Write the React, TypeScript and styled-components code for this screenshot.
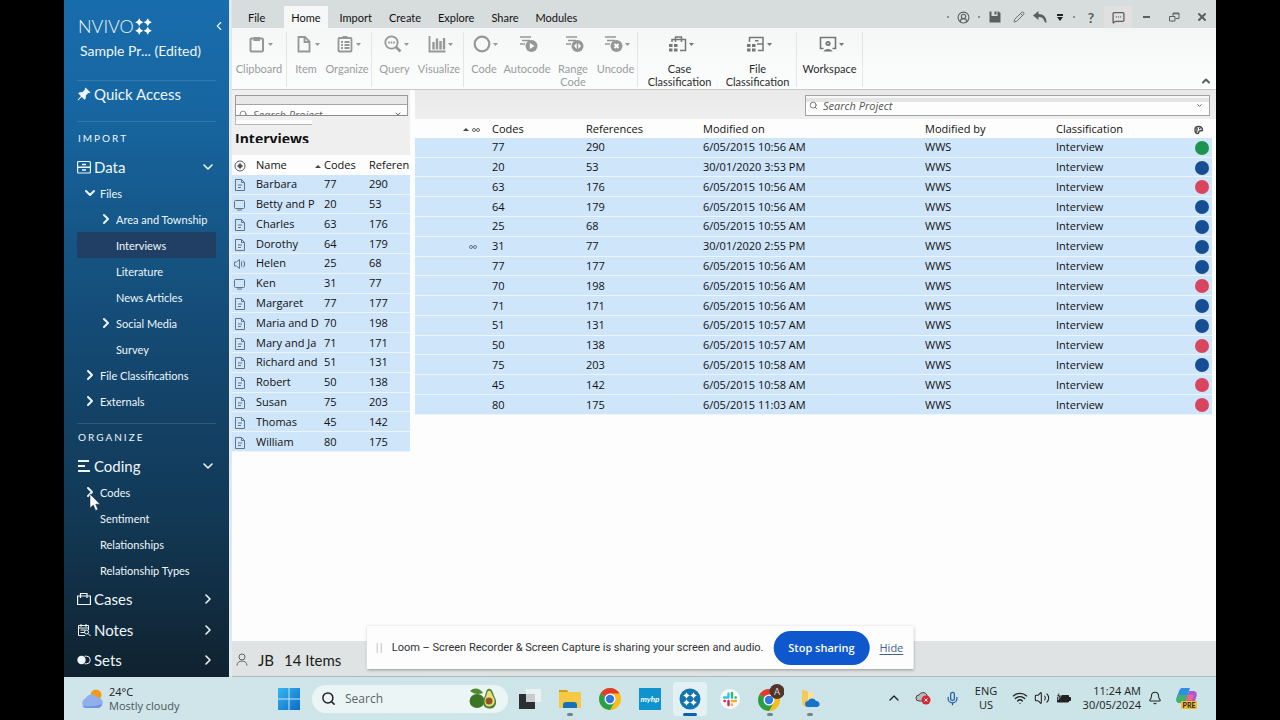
import React from "react";
import styled, { createGlobalStyle, css } from "styled-components";
import { ChevronDown, ChevronRight, ChevronLeft, ChevronUp, CircleUserRound, Pencil, MessageSquareMore, X, Bell, Mic, Wifi, Volume2, Search } from "lucide-react";

const uiFont = `"Open Sans", "Noto Sans", sans-serif`;

const Global = createGlobalStyle`
  *, *::before, *::after { box-sizing: border-box; }
  body { margin: 0; background: #000; font-family: Lato, sans-serif; color: #1c1c1c; }
  button { font: inherit; color: inherit; background: none; border: 0; padding: 0; margin: 0; }
  input { font: inherit; color: inherit; border: 0; padding: 0; background: none; outline: none; min-width: 0; }
  a { color: inherit; text-decoration: none; }
`;

const Desktop = styled.div`
  position: relative;
  width: 90%;
  min-height: 100vh;
  margin: 0 auto;
  display: flex;
  flex-direction: column;
  overflow: hidden;
`;

const AppWindow = styled.div`
  flex: 1;
  display: flex;
  background: #fdfdfd;
`;

/* ---------- Sidebar ---------- */

const Sidebar = styled.nav`
  width: 165px;
  flex: none;
  padding: 16px 13px 0;
  color: #eef6fb;
  background: linear-gradient(#186dac 0%, #1766a1 16%, #155584 36%, #14456c 56%, #123956 76%, #10222f 100%);
`;

const LogoRow = styled.div`
  height: 20px;
  display: flex;
  align-items: center;
  gap: 1px;
  margin-right: -10px;
  padding-left: 1px;
  font-size: 18px;
  font-weight: 300;
`;

const Collapse = styled.button`
  margin-left: auto;
  display: flex;
`;

const ProjectName = styled.div`
  height: 30px;
  padding-left: 3px;
  font-size: 14px;
  line-height: 30px;
  white-space: nowrap;
`;

const Rule = styled.hr<{ $top: number }>`
  margin: ${(p) => p.$top}px 0 0;
  border: 0;
  border-top: 1px solid rgba(190, 220, 240, 0.16);
`;

const Caption = styled.h2<{ $gap: number }>`
  margin: ${(p) => p.$gap}px 0 10px;
  padding-left: 1px;
  font-size: 10px;
  line-height: 12px;
  font-weight: 400;
  letter-spacing: 2px;
`;

const NavHead = styled.button<{ $h: number }>`
  width: 100%;
  height: ${(p) => p.$h}px;
  display: flex;
  align-items: center;
  gap: 3px;
  font-size: 15px;
  text-align: left;
  > span { flex: 1; }
  > svg:first-child { flex: none; }
`;

const NavItem = styled.a<{ $level: number; $active?: boolean }>`
  position: relative;
  height: 26px;
  display: flex;
  align-items: center;
  gap: 4px;
  padding-left: ${(p) => p.$level * 16 - 9}px;
  font-size: 11px;
  white-space: nowrap;
  ${(p) => p.$active && css`background: #213f64;`}
`;

const ArrowSlot = styled.span`
  width: 12px;
  height: 14px;
  flex: none;
  display: flex;
  align-items: center;
  justify-content: center;
  svg { flex: none; }
`;

const Cursor = styled.svg`
  position: absolute;
  left: 12px;
  top: 14px;
  z-index: 2;
`;

/* ---------- Main area ---------- */

const Main = styled.div`
  flex: 1;
  min-width: 0;
  display: flex;
  flex-direction: column;
  border-left: 3px solid #dfe9ee;
`;

const TitleBar = styled.header`
  height: 28px;
  display: flex;
  justify-content: space-between;
  align-items: flex-end;
  background: #d7dcdc;
`;

const Tabs = styled.div`
  display: flex;
  gap: 1px;
  padding-left: 8px;
`;

const Tab = styled.button<{ $active?: boolean }>`
  height: 22px;
  padding: 0 8px;
  font-size: 11px;
  color: #111;
  ${(p) => p.$active && css`
    background: #f6f8f8;
    padding: 0 7px;
    margin: 0 3px 0 10px;
  `}
`;

const WindowTools = styled.div`
  display: flex;
  color: #5c5f60;
`;

const Tool = styled.button<{ $w: number; $lit?: boolean }>`
  width: ${(p) => p.$w}px;
  height: 22px;
  display: flex;
  align-items: center;
  justify-content: center;
  font-size: 14px;
  font-weight: 700;
  background: ${(p) => (p.$lit ? "#e0e0e0" : "none")};
`;

const Dot = styled.span<{ $w: number }>`
  width: ${(p) => p.$w}px;
  display: flex;
  align-items: center;
  justify-content: center;
  &::before { content: ""; width: 2px; height: 2px; background: #8b9090; }
`;

const Ribbon = styled.div`
  height: 62px;
  display: flex;
  padding-top: 4px;
  background: linear-gradient(#f5f7f7, #fcfdfd);
  border-bottom: 1px solid #c6c9c9;
`;

const Group = styled.div`
  height: 55px;
  display: flex;
  align-items: flex-start;
  padding: 0 1px;
  border-right: 1px solid #e4e6e6;
`;

const RibbonButton = styled.button<{ $w: number; $on?: boolean }>`
  width: ${(p) => p.$w}px;
  font-size: 11px;
  line-height: 13px;
  color: ${(p) => (p.$on ? "#2c2c2c" : "#9a9c9c")};
  > span {
    height: 24px;
    margin-bottom: 6px;
    padding-left: 3px;
    display: flex;
    align-items: center;
    justify-content: center;
    gap: 2px;
    color: ${(p) => (p.$on ? "#747777" : "#969898")};
  }
`;

const RibbonEnd = styled.button`
  margin: auto 4px 2px auto;
  display: flex;
  color: #5c5f60;
`;

const Panels = styled.div`
  flex: 1;
  display: flex;
  font-family: ${uiFont};
  font-size: 11px;
`;

const ListPanel = styled.section`
  width: 178px;
  flex: none;
`;

const ListTop = styled.div`
  height: 65px;
  padding: 5px 2px 0 3px;
  background: #efefef;
`;

const ListSearch = styled.label`
  height: 21px;
  display: flex;
  flex-direction: column;
  border: 1px solid #9b9b9b;
  border-bottom-color: #8b8b8b;
  overflow: hidden;
  &::before {
    content: "";
    height: 9px;
    flex: none;
    background: #e8e8e8;
    border-bottom: 1px solid #a5a5a5;
  }
  > span {
    height: 18px;
    flex: none;
    display: flex;
    align-items: center;
    gap: 5px;
    padding: 0 5px 0 3px;
    background: #fdfdfd;
    color: #666;
    font-style: italic;
  }
  input { flex: 1; height: 18px; }
  input::placeholder { color: #666; opacity: 1; }
`;

const SearchTail = styled.div`
  width: 77px;
  height: 9px;
  background: linear-gradient(#efefef 0 4px, #fcfcfc 4px);
  border: 1px solid #b9b9b9;
  border-width: 0 0 1px 1px;
`;

const ListTitle = styled.h1`
  height: 12px;
  margin: 6px 0 0;
  overflow: hidden;
  font-size: 14px;
  line-height: 16px;
  font-weight: 700;
  color: #111;
`;

const DetailPanel = styled.section`
  flex: 1;
  min-width: 0;
  margin-left: 5px;
  padding-right: 4px;
`;

const DetailTop = styled.div`
  height: 29px;
  margin-right: -4px;
  padding: 5px 6px 3px 0;
  display: flex;
  justify-content: flex-end;
  background: linear-gradient(#e9e9e9, #efefef);
`;

const DetailSearch = styled.label`
  width: 405px;
  display: flex;
  align-items: center;
  gap: 5px;
  padding: 0 6px 0 3px;
  border: 1px solid #a2a2a2;
  background: linear-gradient(#f7f7f7 0 2px, #e4e4e4 2px 6px, #fdfdfd 6px);
  color: #555;
  font-style: italic;
  input { flex: 1; height: 16px; }
  input::placeholder { color: #555; opacity: 1; }
`;

const Table = styled.table<{ $h: number }>`
  width: 100%;
  height: ${(p) => p.$h}px;
  table-layout: fixed;
  border-collapse: collapse;
  text-align: left;
  white-space: nowrap;
  line-height: 14px;
  color: #111;
  th { height: ${(p) => p.$h - 277}px; padding: 0; font-weight: 400; }
  td { padding: 0; border-bottom: 1px solid #eaf5fe; }
  tbody tr { background: #cfe5fa; }
  td svg, th svg { vertical-align: middle; }
`;

const IconCell = styled.td`
  &&& { padding-left: 2px; color: #5f7485; }
`;

const EndCell = styled.td`
  &&& { text-align: right; padding-right: 3px; }
`;

const Swatch = styled.span<{ $c: string }>`
  display: inline-block;
  width: 14px;
  height: 14px;
  vertical-align: middle;
  border-radius: 50%;
  background: ${(p) => p.$c};
`;

const StatusBar = styled.footer`
  height: 36px;
  display: flex;
  align-items: center;
  gap: 10px;
  padding: 2px 0 0 4px;
  font-size: 15px;
  background: #dfe3e3;
  border-bottom: 1px solid #aebabc;
`;

/* ---------- Share bar ---------- */

const ShareBar = styled.div`
  position: absolute;
  left: 50%;
  bottom: 51px;
  transform: translateX(-50%);
  height: 43px;
  display: flex;
  align-items: center;
  gap: 10px;
  padding: 0 10px;
  font-family: ${uiFont};
  font-size: 11px;
  color: #2f3235;
  white-space: nowrap;
  background: #fdfdfd;
  box-shadow: 0 1px 3px rgba(0, 0, 0, 0.35);
`;

const ShareText = styled.span`
  font-family: Roboto, sans-serif;
`;

const Grip = styled.span`
  width: 5px;
  height: 10px;
  border: solid #c4c4c4;
  border-width: 0 1px;
`;

const StopButton = styled.button`
  width: 96px;
  height: 34px;
  border-radius: 17px;
  font-weight: 600;
  color: #fff;
  background: #0f57cd;
`;

const HideLink = styled.a`
  color: #3f6291;
  text-decoration: underline;
  text-underline-offset: 2px;
`;

/* ---------- Taskbar ---------- */

const Taskbar = styled.div`
  height: 43px;
  display: flex;
  align-items: center;
  font-family: ${uiFont};
  font-size: 11px;
  line-height: 14px;
  color: #222;
  background: linear-gradient(90deg, #cfe5e9, #cbe4e7);
`;

const Weather = styled.button`
  width: 208px;
  display: flex;
  align-items: center;
  gap: 5px;
  padding-left: 16px;
  text-align: left;
  small { display: block; font-size: 11px; color: #4b5558; }
`;

const TaskButton = styled.button<{ $active?: boolean; $running?: boolean }>`
  position: relative;
  width: 34px;
  height: 34px;
  margin-right: 6px;
  display: flex;
  align-items: center;
  justify-content: center;
  border-radius: 4px;
  background: ${(p) => (p.$active ? "#e4f1f4" : "none")};
  ${(p) => (p.$active || p.$running) && css`
    &::after {
      content: "";
      position: absolute;
      bottom: 0;
      left: 50%;
      width: ${p.$active ? 14 : 6}px;
      height: 3px;
      margin-left: ${p.$active ? -7 : -3}px;
      border-radius: 2px;
      background: ${p.$active ? "#0d62b0" : "#73858a"};
    }
  `}
`;

const TaskSearch = styled.label`
  width: 196px;
  height: 28px;
  margin-right: 5px;
  display: flex;
  align-items: center;
  gap: 9px;
  padding: 0 11px 0 9px;
  border-radius: 14px;
  background: #ebf5f5;
  font-size: 12px;
  input { flex: 1; }
  input::placeholder { color: #5a6466; opacity: 1; }
`;

const Tray = styled.div`
  margin-left: auto;
  padding: 0 11px 1px 0;
  display: flex;
  align-items: center;
  text-align: center;
`;

const TrayButton = styled.button<{ $w: number }>`
  width: ${(p) => p.$w}px;
  display: flex;
  align-items: center;
  justify-content: center;
`;

const Clock = styled.div`
  width: 66px;
  text-align: right;
`;

/* ---------- Icons ---------- */

const Caret = () => (
  <svg width="5" height="3" viewBox="0 0 5 3"><path d="M0 0h5L2.5 3z" fill="currentColor" /></svg>
);

const Icon = ({ children, size = 18, sw = 1.8 }: { children: React.ReactNode; size?: number; sw?: number }) => (
  <svg width={size} height={size} viewBox="0 0 18 18" fill="none" stroke="currentColor" strokeWidth={sw}>{children}</svg>
);

const codeLines = <path d="M0 2h11M2 5.500h8M0 9h5" strokeWidth="1.600" />;
const grid = <path d="M0 9h3.500v3H0zM5 9h3.500v3H5zM0 13.500h3.500v3H0zM5 13.500h3.500v3H5z" fill="currentColor" stroke="none" />;

const ribbonIcons: Record<string, React.ReactNode> = {
  Clipboard: <><rect x="2.500" y="3.500" width="12.500" height="13" rx="1" strokeWidth="2" /><path d="M5.500 2h6.500v4H5.500z" fill="currentColor" stroke="none" /></>,
  Item: <path d="M3.500 2h6.500l4.500 4.500v10h-11zM9.500 2v5h5" />,
  Organize: <><rect x="2.500" y="3" width="13" height="13.500" rx="1" /><path d="M6.500 1h5v3h-5z" fill="currentColor" stroke="none" /><path d="M5 7h2M8.500 7h5M5 10h2M8.500 10h5M5 13h2M8.500 13h5" /></>,
  Query: <><circle cx="7.500" cy="7.500" r="6.200" /><path d="M12 12l4.500 4.500" strokeWidth="2.600" /><path d="M4.200 7.500h1.600M6.700 7.500h1.600M9.200 7.500h1.600" /></>,
  Visualize: <><path d="M1.500 1v15.500h16" /><path d="M5.500 7v7.500M9 3.500v11M12.500 6v8.500M16 3v11.500" strokeWidth="2.400" /></>,
  Code: <circle cx="9" cy="9" r="7.300" strokeWidth="2.200" />,
  Autocode: <>{codeLines}<circle cx="11.500" cy="11" r="6" fill="currentColor" stroke="none" /><path d="M9.800 8l4.700 3-4.700 3z" fill="#fff" stroke="none" /></>,
  "Range Code": <>{codeLines}<circle cx="11.500" cy="11" r="6" fill="currentColor" stroke="none" /><path d="M10.700 8v6l-2.700-3zM12.300 8v6l2.700-3z" fill="#fff" stroke="none" /></>,
  Uncode: <>{codeLines}<circle cx="11.500" cy="11" r="6" fill="currentColor" stroke="none" /><path d="M9.500 9l4 4M13.500 9l-4 4" stroke="#fff" /></>,
  "Case Classification": <><path d="M3 7V4.500h13.500v11H11M6.500 4V2h6v2M6.500 7V5M12.500 7V5" strokeWidth="1.500" />{grid}</>,
  "File Classification": <><path d="M2.500 7V2.500h13.500v13h-5M10 9h6M8 5.800h3.500" strokeWidth="1.500" />{grid}</>,
  Workspace: <><path d="M4.500 13.500H1.500v-11h15v11h-3" strokeWidth="1.600" /><circle cx="9" cy="8.500" r="1.700" /><path d="M4.500 16.500c1-3.500 8-3.500 9 0z" fill="currentColor" stroke="none" /></>,
};

type RibbonItem = [name: string, width: number, caret: boolean];
const ribbonGroups: RibbonItem[][] = [
  [["Clipboard", 52, true]],
  [["Item", 36, true], ["Organize", 46, true]],
  [["Query", 43, true], ["Visualize", 46, true]],
  [["Code", 38, true], ["Autocode", 48, false], ["Range Code", 44, false], ["Uncode", 41, true]],
  [["Case Classification", 81, true], ["File Classification", 75, true]],
  [["Workspace", 63, true]],
];
const enabled = ["Case Classification", "File Classification", "Workspace"];

const LogoMark = ({ size = 17, color = "#fff" }: { size?: number; color?: string }) => (
  <svg width={size} height={size} viewBox="0 0 16 16" fill={color}>
    {[[4, 4], [12, 4], [4, 12], [12, 12]].map(([x, y]) => (
      <path key={`${x}-${y}`} d={`M${x} ${y - 3.8}l1.300 2.500 2.500 1.300-2.500 1.300-1.300 2.500-1.300-2.500-2.500-1.300 2.500-1.300z`} />
    ))}
  </svg>
);

const DocIcon = () => (
  <svg width="12" height="12" viewBox="0 0 12 12" fill="none" stroke="currentColor"><path d="M1.500.5h6l3 3v8h-9zM7.500.5v3h3M4 6h4M4 8.500h3" /></svg>
);
const VideoIcon = () => (
  <svg width="12" height="12" viewBox="0 0 12 12" fill="none" stroke="currentColor"><rect x=".5" y="1.500" width="10" height="8" rx="1" /><path d="M3 11h5" /></svg>
);
const AudioIcon = () => (
  <svg width="12" height="12" viewBox="0 0 12 12" fill="none" stroke="currentColor"><path d="M.5 4h2l3-2.500v9L2.500 8h-2zM7.500 3.500v5M9 2.500c2 2 2 5 0 7M10.500 4v4" /></svg>
);
const LinkIcon = () => (
  <svg width="8" height="6" viewBox="0 0 8 6" fill="none" stroke="#666"><circle cx="2" cy="3" r="1.500" /><circle cx="6" cy="3" r="1.500" /></svg>
);
const SortIcon = () => (
  <svg width="6" height="3" viewBox="0 0 6 3"><path d="M0 3h6L3 0z" fill="#444" /></svg>
);
const ChromeIcon = () => (
  <svg width="22" height="22" viewBox="0 0 22 22">
    <circle cx="11" cy="11" r="11" fill="#f8bd16" />
    <path d="M11 11L1.500 5.500A11 11 0 0 1 20.500 5.500H11z" fill="#df3b2e" />
    <path d="M1.500 5.500A11 11 0 0 0 11 22l4.800-8.300L11 11z" fill="#28a04b" />
    <circle cx="11" cy="11" r="5.500" fill="#fff" /><circle cx="11" cy="11" r="4.200" fill="#2f78dc" />
  </svg>
);

/* ---------- Data ---------- */

type Row = [name: string, kind: "doc" | "video" | "audio", codes: number, refs: number, modified: string, color: string];
const green = "#1d9350";
const blue = "#164d93";
const red = "#d9455f";
const rows: Row[] = [
  ["Barbara", "doc", 77, 290, "6/05/2015 10:56 AM", green],
  ["Betty and P", "video", 20, 53, "30/01/2020 3:53 PM", blue],
  ["Charles", "doc", 63, 176, "6/05/2015 10:56 AM", red],
  ["Dorothy", "doc", 64, 179, "6/05/2015 10:56 AM", blue],
  ["Helen", "audio", 25, 68, "6/05/2015 10:55 AM", blue],
  ["Ken", "video", 31, 77, "30/01/2020 2:55 PM", blue],
  ["Margaret", "doc", 77, 177, "6/05/2015 10:56 AM", blue],
  ["Maria and D", "doc", 70, 198, "6/05/2015 10:56 AM", red],
  ["Mary and Ja", "doc", 71, 171, "6/05/2015 10:56 AM", blue],
  ["Richard and", "doc", 51, 131, "6/05/2015 10:57 AM", blue],
  ["Robert", "doc", 50, 138, "6/05/2015 10:57 AM", red],
  ["Susan", "doc", 75, 203, "6/05/2015 10:58 AM", blue],
  ["Thomas", "doc", 45, 142, "6/05/2015 10:58 AM", red],
  ["William", "doc", 80, 175, "6/05/2015 11:03 AM", red],
];
const kindIcon = { doc: <DocIcon />, video: <VideoIcon />, audio: <AudioIcon /> };

type Nav = [label: string, level: number, arrow?: "down" | "right"];
const dataNav: Nav[] = [
  ["Files", 1, "down"],
  ["Area and Township", 2, "right"],
  ["Interviews", 2],
  ["Literature", 2],
  ["News Articles", 2],
  ["Social Media", 2, "right"],
  ["Survey", 2],
  ["File Classifications", 1, "right"],
  ["Externals", 1, "right"],
];
const codingNav: Nav[] = [["Codes", 1, "right"], ["Sentiment", 1], ["Relationships", 1], ["Relationship Types", 1]];

const NavList = ({ items }: { items: Nav[] }) => (
  <>
    {items.map(([label, level, arrow]) => (
      <NavItem key={label} href="#" $level={level} $active={label === "Interviews"}>
        <ArrowSlot>
          {arrow === "down" && <ChevronDown size={16} strokeWidth={3} />}
          {arrow === "right" && <ChevronRight size={16} strokeWidth={3} />}
        </ArrowSlot>
        {label}
        {label === "Codes" && (
          <Cursor width="12" height="19" viewBox="0 0 12 19"><path d="M1 1v14l3.300-3 2.300 5.500 2.400-1-2.300-5.300H11z" fill="#fff" stroke="#23384a" strokeWidth=".6" /></Cursor>
        )}
      </NavItem>
    ))}
  </>
);

export default function App() {
  return (
    <Desktop>
      <Global />
      <AppWindow>
        <Sidebar aria-label="Project">
          <LogoRow>
            NVIVO<LogoMark />
            <Collapse aria-label="Collapse navigation"><ChevronLeft size={14} strokeWidth={2} /></Collapse>
          </LogoRow>
          <ProjectName>Sample Pr... (Edited)</ProjectName>
          <Rule $top={14} />
          <NavHead $h={26}>
            <svg width="14" height="14" viewBox="0 0 14 14" fill="currentColor"><path d="M8.500.5l5 5-1.500.8-.8-.2-2.300 2.500-.2 2.900-1.200 1.200-2.700-2.800L1 13.500.5 13l3.500-3.900L1.300 6.500l1.200-1.200 3-.3L7.900 2.800l-.2-.9z" /></svg>
            <span>Quick Access</span>
          </NavHead>
          <Rule $top={14} />
          <Caption $gap={10}>IMPORT</Caption>
          <NavHead $h={26}>
            <svg width="14" height="14" viewBox="0 0 14 14" fill="none" stroke="currentColor"><rect x=".6" y="1.500" width="12.800" height="11.500" rx="1" strokeWidth="1.200" /><path d="M.5 7.200h13M5 4.500h4M5 10h4" strokeWidth="1.400" /></svg>
            <span>Data</span>
            <ChevronDown size={16} strokeWidth={2.4} />
          </NavHead>
          <NavList items={dataNav} />
          <Rule $top={9} />
          <Caption $gap={7}>ORGANIZE</Caption>
          <NavHead $h={26}>
            <svg width="14" height="14" viewBox="0 0 14 14" fill="none" stroke="currentColor" strokeWidth="2.200"><path d="M1 2h11M1 7h7M1 12h12" /></svg>
            <span>Coding</span>
            <ChevronDown size={16} strokeWidth={2.4} />
          </NavHead>
          <NavList items={codingNav} />
          <NavHead $h={32}>
            <svg width="14" height="14" viewBox="0 0 14 14" fill="none" stroke="currentColor"><path d="M.6 4h12.800v8.500H.6zM3.500 6V1.500h6.500V6" strokeWidth="1.200" /></svg>
            <span>Cases</span>
            <ChevronRight size={16} strokeWidth={2.4} />
          </NavHead>
          <NavHead $h={30}>
            <svg width="14" height="14" viewBox="0 0 14 14" fill="none" stroke="currentColor"><path d="M11.500 7V2.500h-10v10H8M4 1v3M9 1v3M1.500 5h10M3.500 7h5M3.500 9.500h4" /><circle cx="9.500" cy="9" r="2" /><path d="M11 10.500l2.500 2.500" /></svg>
            <span>Notes</span>
            <ChevronRight size={16} strokeWidth={2.4} />
          </NavHead>
          <NavHead $h={30}>
            <svg width="14" height="14" viewBox="0 0 14 14"><circle cx="4.500" cy="7" r="4.200" fill="currentColor" /><path d="M7.500 3.200h2a3.800 3.800 0 0 1 0 7.600h-2" fill="none" stroke="currentColor" /></svg>
            <span>Sets</span>
            <ChevronRight size={16} strokeWidth={2.4} />
          </NavHead>
        </Sidebar>

        <Main>
          <TitleBar>
            <Tabs>
              {["File", "Home", "Import", "Create", "Explore", "Share", "Modules"].map((t) => (
                <Tab key={t} $active={t === "Home"}>{t}</Tab>
              ))}
            </Tabs>
            <WindowTools>
              <Dot $w={6} />
              <Tool $w={24} aria-label="Account"><CircleUserRound size={13} /></Tool>
              <Dot $w={7} />
              <Tool $w={26} aria-label="Save">
                <svg width="12" height="12" viewBox="0 0 12 12" fill="currentColor"><path d="M.5.500h2v4.500h6V.500h1L11.500 2v9.500H.5zM5.500.500h2v3h-2z" /></svg>
              </Tool>
              <Tool $w={22} aria-label="Edit"><Pencil size={12} strokeWidth={1.8} /></Tool>
              <Tool $w={20} aria-label="Undo">
                <svg width="14" height="12" viewBox="0 0 14 12"><path d="M5.500 0L0 4.500 5.500 9V6c3 0 5 .8 6.500 5.500h1.500C13.500 6 10.500 3 5.500 3z" fill="currentColor" /></svg>
              </Tool>
              <Tool $w={20} aria-label="Customize">
                <svg width="6" height="7" viewBox="0 0 6 7" fill="#222"><path d="M0 0h6v2H0zM0 3h6L3 7z" /></svg>
              </Tool>
              <Dot $w={8} />
              <Tool $w={26} aria-label="Help">?</Tool>
              <Tool $w={28} $lit aria-label="Feedback"><MessageSquareMore size={13} strokeWidth={2.4} /></Tool>
              <Tool $w={28} aria-label="Minimize"><svg width="7" height="2" viewBox="0 0 7 2"><path d="M0 0h7v2H0z" fill="currentColor" /></svg></Tool>
              <Tool $w={28} aria-label="Restore">
                <svg width="11" height="10" viewBox="0 0 11 10" fill="none" stroke="currentColor"><path d="M.5 4.500h5.500v4.500H.5zM4 4V1h6v5.500H6.500M4 1.800h6" /></svg>
              </Tool>
              <Tool $w={28} aria-label="Close"><X size={12} strokeWidth={4} /></Tool>
            </WindowTools>
          </TitleBar>

          <Ribbon>
            {ribbonGroups.map((g) => (
              <Group key={g[0][0]}>
                {g.map(([name, w, caret]) => (
                  <RibbonButton key={name} $w={w} $on={enabled.includes(name)}>
                    <span><Icon>{ribbonIcons[name]}</Icon>{caret && <Caret />}</span>
                    {name}
                  </RibbonButton>
                ))}
              </Group>
            ))}
            <RibbonEnd aria-label="Collapse ribbon"><ChevronUp size={12} strokeWidth={4} /></RibbonEnd>
          </Ribbon>

          <Panels>
            <ListPanel>
              <ListTop>
                <ListSearch>
                  <span>
                    <Search size={9} />
                    <input placeholder="Search Project" aria-label="Search list" />
                    <ChevronDown size={8} strokeWidth={3} />
                  </span>
                </ListSearch>
                <SearchTail />
                <ListTitle>Interviews</ListTitle>
              </ListTop>
              <Table $h={297}>
                <colgroup><col style={{ width: 24 }} /><col style={{ width: 59 }} /><col style={{ width: 9 }} /><col style={{ width: 45 }} /><col /></colgroup>
                <thead>
                  <tr>
                    <th>
                      <svg width="15" height="12" viewBox="0 0 15 12" fill="none" stroke="#555"><circle cx="8" cy="6" r="5" /><path d="M8 3l3 3-3 3-3-3z" fill="#555" stroke="none" /></svg>
                    </th>
                    <th>Name</th>
                    <th><SortIcon /></th>
                    <th>Codes</th>
                    <th>Referen</th>
                  </tr>
                </thead>
                <tbody>
                  {rows.map(([name, kind, codes, refs]) => (
                    <tr key={name}>
                      <IconCell>{kindIcon[kind]}</IconCell>
                      <td>{name}</td>
                      <td />
                      <td>{codes}</td>
                      <td>{refs}</td>
                    </tr>
                  ))}
                </tbody>
              </Table>
            </ListPanel>

            <DetailPanel>
              <DetailTop>
                <DetailSearch>
                  <Search size={9} />
                  <input placeholder="Search Project" aria-label="Search project" />
                  <ChevronDown size={7} strokeWidth={3} />
                </DetailSearch>
              </DetailTop>
              <Table $h={296}>
                <colgroup><col style={{ width: 48 }} /><col style={{ width: 29 }} /><col style={{ width: 94 }} /><col style={{ width: 117 }} /><col style={{ width: 222 }} /><col style={{ width: 131 }} /><col /><col style={{ width: 24 }} /></colgroup>
                <thead>
                  <tr>
                    <th />
                    <th><SortIcon /> <LinkIcon /></th>
                    <th>Codes</th>
                    <th>References</th>
                    <th>Modified on</th>
                    <th>Modified by</th>
                    <th>Classification</th>
                    <th>
                      <svg width="18" height="10" viewBox="0 0 18 10" fill="none" stroke="#444" strokeWidth="1.400"><path d="M14.500 5.500c0-2.500-1.500-4-4-4S7 3 7 5s1 3.500 3 3.500c1.500 0 0-2 1.500-2.500z" /><path d="M8 4h2M11 3.500h1.500M8 6h1.500" /></svg>
                    </th>
                  </tr>
                </thead>
                <tbody>
                  {rows.map(([name, , codes, refs, modified, color]) => (
                    <tr key={name}>
                      <td />
                      <td>{name === "Ken" && <svg width="14" height="6" viewBox="-6 0 14 6" fill="none" stroke="#678"><circle cx="2" cy="3" r="1.500" /><circle cx="6" cy="3" r="1.500" /></svg>}</td>
                      <td>{codes}</td>
                      <td>{refs}</td>
                      <td>{modified}</td>
                      <td>WWS</td>
                      <td>Interview</td>
                      <EndCell><Swatch $c={color} /></EndCell>
                    </tr>
                  ))}
                </tbody>
              </Table>
            </DetailPanel>
          </Panels>

          <StatusBar>
            <svg width="12" height="13" viewBox="0 0 12 13" fill="none" stroke="#666"><circle cx="6" cy="4" r="3" /><path d="M1 12.500c0-6 10-6 10 0" /></svg>
            <span>JB</span>
            <span>14 Items</span>
          </StatusBar>
        </Main>
      </AppWindow>

      <Taskbar>
        <Weather>
          <svg width="24" height="22" viewBox="0 0 24 22"><circle cx="16" cy="7" r="5.500" fill="#f39a1e" /><path d="M6 20a5 5 0 0 1-.5-9.500A6.500 6.500 0 0 1 17 9.500 5.200 5.200 0 0 1 18 20z" fill="#8fb0ea" /><path d="M6 20a5 5 0 0 1-3.500-2C8 19 17 18 22 16a5 5 0 0 1-4 4z" fill="#6d93dd" /></svg>
          <span>24°C<small>Mostly cloudy</small></span>
        </Weather>
        <TaskButton aria-label="Start">
          <svg width="22" height="22" viewBox="0 0 22 22"><defs><linearGradient id="win" x1="0" y1="0" x2="1" y2="1"><stop stopColor="#35b7ee" /><stop offset="1" stopColor="#0a6cc8" /></linearGradient></defs><path d="M0 0h10.500v10.500H0zM11.500 0H22v10.500H11.500zM0 11.500h10.500V22H0zM11.500 11.500H22V22H11.500z" fill="url(#win)" /></svg>
        </TaskButton>
        <TaskSearch>
          <Search size={15} strokeWidth={2.4} />
          <input placeholder="Search" aria-label="Search" />
          <svg width="28" height="21" viewBox="0 0 28 21"><path d="M1 3c4-4 10-3 13 2-5 2-9 1-13-2z" fill="#4d8a32" /><ellipse cx="8" cy="13" rx="7.500" ry="7" fill="#3d7527" /><path d="M19 1c4-1 5 4 6 7 5 8 0 13-5 12.500C13 20 13 13 16 8c1-3 1-6 3-7z" fill="#49812c" /><path d="M20 2.500c2 0 3 4 4 6 4 6 0 10-4 10s-6-5-3-10c1-2 1-6 3-6z" fill="#e6df7c" /><circle cx="20" cy="13" r="3.500" fill="#94542b" /></svg>
        </TaskSearch>
        <TaskButton aria-label="Task view">
          <svg width="22" height="20" viewBox="0 0 22 20"><path d="M0 5h16v15H0z" fill="#2c2f31" /><path d="M7 0h15v13H7z" fill="#f0f4f4" fillOpacity=".8" /></svg>
        </TaskButton>
        <TaskButton $running aria-label="Files">
          <svg width="22" height="20" viewBox="0 0 22 20"><path d="M0 1h8l2 3H0z" fill="#d99a1c" /><path d="M0 3h22v16H0z" fill="#f6c944" /><path d="M4 19v-3q0-3 3-3h8q3 0 3 3v3z" fill="#1670b8" /></svg>
        </TaskButton>
        <TaskButton aria-label="Chrome"><ChromeIcon /></TaskButton>
        <TaskButton aria-label="myHP">
          <svg width="22" height="22" viewBox="0 0 22 22"><path d="M0 0h22v22H0z" fill="#0f93cf" /><text x="11" y="14" textAnchor="middle" fontSize="8" fontStyle="italic" fontWeight="700" fontFamily="Lato" fill="#fff">myhp</text></svg>
        </TaskButton>
        <TaskButton $active aria-label="NVivo">
          <svg width="22" height="22" viewBox="0 0 22 22"><circle cx="11" cy="11" r="10.500" fill="#1474ae" /><g transform="translate(4 4)"><LogoMark size={14} /></g></svg>
        </TaskButton>
        <TaskButton aria-label="Slack">
          <svg width="20" height="20" viewBox="0 0 20 20" fill="none" strokeWidth="2.400" strokeLinecap="round"><circle cx="10" cy="10" r="10" fill="#f8fafa" /><path d="M8.500 4.500v4M4 8.500h4" stroke="#36c5f0" /><path d="M12 4v4.500M15.500 8.500h.3" stroke="#2eb67d" /><path d="M12 12h4M12 15.500v.2" stroke="#ecb22e" /><path d="M8.500 12v4M4.500 12h.3" stroke="#e01e5a" /></svg>
        </TaskButton>
        <TaskButton $running aria-label="Chrome profile A">
          <svg width="28" height="30" viewBox="0 0 28 30"><g transform="translate(2 5)"><ChromeIcon /></g><circle cx="21" cy="7.500" r="7.500" fill="#50352e" /><text x="21" y="11" textAnchor="middle" fontSize="9" fontFamily="Lato" fill="#e8dad4">A</text></svg>
        </TaskButton>
        <TaskButton $running aria-label="OneDrive folder">
          <svg width="20" height="20" viewBox="0 0 20 20"><path d="M2 1l5 1 2 2v15l-7-3z" fill="#f4c95b" /><path d="M8 3h5v13H8z" fill="#fbe29b" /><path d="M8 18a3 3 0 0 1 0-6 4.500 4.500 0 0 1 8 0 3 3 0 0 1 1 6z" fill="#1673c9" /></svg>
        </TaskButton>
        <Tray>
          <TrayButton $w={28} aria-label="Hidden icons"><ChevronUp size={16} /></TrayButton>
          <TrayButton $w={30} aria-label="OneDrive">
            <svg width="16" height="14" viewBox="0 0 16 14"><path d="M4 10a3 3 0 0 1 0-6 4.500 4.500 0 0 1 8 0v6z" fill="#bbb" stroke="#444" /><circle cx="11" cy="9" r="4.500" fill="#d6262f" /><path d="M9.500 7.500l3 3M12.500 7.500l-3 3" stroke="#fff" /></svg>
          </TrayButton>
          <TrayButton $w={28} aria-label="Microphone"><Mic size={15} color="#2460a8" /></TrayButton>
          <TrayButton $w={40}>ENG<br />US</TrayButton>
          <TrayButton $w={27} aria-label="Wi-Fi"><Wifi size={16} /></TrayButton>
          <TrayButton $w={18} aria-label="Volume"><Volume2 size={16} strokeWidth={1.6} /></TrayButton>
          <TrayButton $w={24} aria-label="Battery">
            <svg width="15" height="12" viewBox="0 0 15 12"><path d="M3 3.500h9.500v6.500H1.500V6zM13 5.500h1.500v3H13z" fill="#222" stroke="#222" /><path d="M3.500 0L.5 4.500h2.200L2 8l3.500-4.500H3.300z" stroke="#cbe4e7" fill="#222" strokeWidth=".6" /></svg>
          </TrayButton>
          <Clock>11:24 AM<br />30/05/2024</Clock>
          <TrayButton $w={28} aria-label="Notifications"><Bell size={14} strokeWidth={1.8} /></TrayButton>
          <TrayButton $w={36} aria-label="Copilot">
            <svg width="24" height="22" viewBox="0 0 24 22"><path d="M7 1h8l-5 15H5C0 16 1 11 3 7c1-3 2-6 4-6z" fill="#2d8fe0" /><path d="M3 8h9l-3 8H5c-5 0-4-4-2-8z" fill="#3fb26b" /><path d="M14 4h4c5 0 4 4 3 7-1 4-2 5-5 5h-6z" fill="#b056d6" /><path d="M13 8h6l-3 8h-6z" fill="#e9668f" /><rect x="6" y="14" width="16" height="8" rx="1" fill="#f4bd2c" /><text x="14" y="20.500" textAnchor="middle" fontSize="7" fontWeight="700" fontFamily="Lato" fill="#222">PRE</text></svg>
          </TrayButton>
        </Tray>
      </Taskbar>

      <ShareBar>
        <Grip />
        <ShareText>Loom – Screen Recorder &amp; Screen Capture is sharing your screen and audio.</ShareText>
        <StopButton>Stop sharing</StopButton>
        <HideLink href="#">Hide</HideLink>
      </ShareBar>
    </Desktop>
  );
}
